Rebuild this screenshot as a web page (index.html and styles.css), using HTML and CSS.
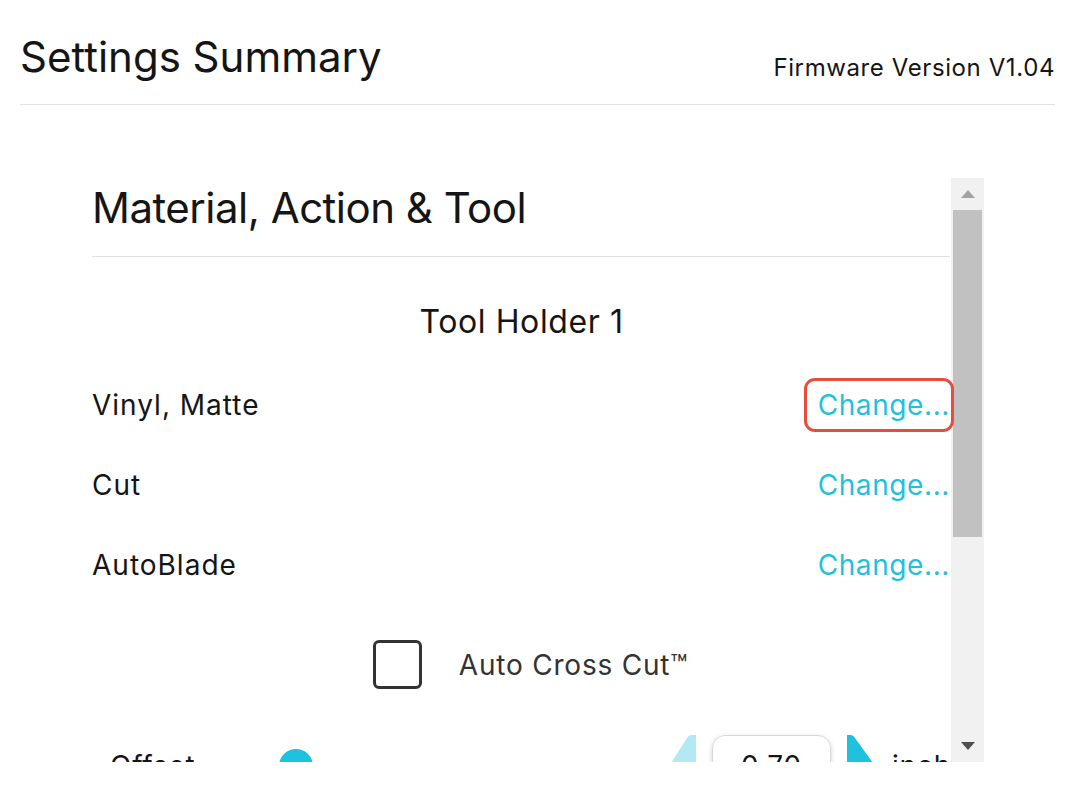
FILE: index.html
```html
<!DOCTYPE html>
<html lang="en">
<head>
<meta charset="utf-8">
<title>Settings Summary</title>
<link rel="stylesheet" href="styles.css">
</head>
<body>
<header class="top">
  <h1 class="page-title">Settings Summary</h1>
  <span class="firmware">Firmware Version V1.04</span>
</header>
<main class="panel">
  <div class="content">
    <h2 class="section-title">Material, Action &amp; Tool</h2>
    <div class="holder">Tool Holder 1</div>
    <div class="row"><span class="label">Vinyl, Matte</span><a class="change highlight">Change...</a></div>
    <div class="row"><span class="label">Cut</span><a class="change">Change...</a></div>
    <div class="row"><span class="label">AutoBlade</span><a class="change">Change...</a></div>
    <div class="check-row">
      <span class="checkbox"></span>
      <span class="check-label">Auto Cross Cut™</span>
    </div>
    <div class="offset-row">
      <span class="offset-label">Offset</span>
      <div class="slider"><span class="knob"></span></div>
      <svg class="tri" width="25" height="62" viewBox="0 0 25 62"><path d="M0 28 L16 3 Q18 0 20 0 L25 0 L25 62 L0 62 Z" fill="#b3e9f3"/></svg>
      <div class="num">0.70</div>
      <svg class="tri" width="26" height="62" viewBox="0 0 26 62"><path d="M0 62 L0 0 L4 0 Q6 0 8 3 L26 28 L26 62 Z" fill="#1fc1de"/></svg>
      <span class="unit">inch</span>
    </div>
  </div>
  <div class="scrollbar">
    <div class="sb-btn"><svg width="16" height="10" viewBox="0 0 16 10"><path d="M8 1 L15 9 L1 9 Z" fill="#a3a3a3"/></svg></div>
    <div class="sb-track"><div class="sb-thumb"></div></div>
    <div class="sb-btn"><svg width="16" height="10" viewBox="0 0 16 10"><path d="M1 1 L15 1 L8 9 Z" fill="#505050"/></svg></div>
  </div>
</main>
</body>
</html>
```
FILE: styles.css
```css
html, body {
  margin: 0;
  padding: 0;
  background: #ffffff;
}
body {
  font-family: Inter, "Liberation Sans", sans-serif;
  color: #151515;
}
.top {
  display: flex;
  justify-content: space-between;
  align-items: flex-end;
  height: 104px;
  margin: 0 11px 0 20px;
  border-bottom: 1px solid #e2e2e6;
}
.page-title {
  margin: 0 0 22px 0;
  font-size: 42px;
  line-height: 50px;
  font-weight: 400;
  letter-spacing: 0;
}
.firmware {
  margin-bottom: 21px;
  font-size: 24px;
  line-height: 30px;
  letter-spacing: 0.6px;
}
.panel {
  display: flex;
  margin: 73px 0 0 92px;
  width: 892px;
  height: 584px;
}
.content {
  position: relative;
  z-index: 1;
  width: 859px;
  overflow-y: clip;
  overflow-x: visible;
}
.section-title {
  margin: 0 1px 0 0;
  padding: 5px 0 23px 0;
  border-bottom: 1px solid #dfe1e5;
  font-size: 42px;
  line-height: 50px;
  font-weight: 400;
  letter-spacing: -0.5px;
}
.holder {
  margin-top: 45px;
  text-align: center;
  font-size: 32px;
  line-height: 40px;
  letter-spacing: 0.6px;
}
.row {
  display: flex;
  justify-content: space-between;
  align-items: center;
  height: 80px;
  font-size: 28px;
}
.holder + .row {
  margin-top: 23px;
}
.label {
  letter-spacing: 1px;
}
.change {
  color: #1fc1de;
  line-height: 48px;
  padding: 0 1px 0 11px;
  border-radius: 8px;
  letter-spacing: 0.6px;
}
.highlight {
  outline: 3px solid #e2503c;
}
.check-row {
  display: flex;
  justify-content: center;
  align-items: center;
  gap: 37px;
  margin-top: 35px;
  height: 49px;
  padding-left: 18px;
}
.checkbox {
  box-sizing: border-box;
  width: 49px;
  height: 49px;
  border: 3px solid #333333;
  border-radius: 6px;
}
.check-label {
  font-size: 28px;
  color: #333333;
  letter-spacing: 0.8px;
}
.offset-row {
  display: flex;
  align-items: center;
  margin-top: 46px;
  height: 62px;
  padding-left: 18px;
  font-size: 28px;
  letter-spacing: 0.8px;
}
.offset-label {
  width: 169px;
}
.slider {
  width: 393px;
  display: flex;
  align-items: center;
}
.knob {
  width: 34px;
  height: 34px;
  border-radius: 50%;
  background: #1fc1de;
}
.tri {
  display: block;
  flex-shrink: 0;
}
.num {
  box-sizing: border-box;
  flex-shrink: 0;
  width: 119px;
  height: 62px;
  margin: 0 16px;
  border: 1px solid #d8d8d8;
  border-radius: 13px;
  box-shadow: 0 2px 5px rgba(0,0,0,0.18);
  text-align: center;
  line-height: 60px;
}
.unit {
  margin-left: 19px;
}
.scrollbar {
  width: 33px;
  background: #f1f1f1;
  display: flex;
  flex-direction: column;
}
.sb-btn {
  height: 32px;
  display: flex;
  justify-content: center;
  align-items: center;
}
.sb-track {
  flex: 1;
}
.sb-thumb {
  margin: 0 2px;
  height: 327px;
  background: #c1c1c1;
}
```
